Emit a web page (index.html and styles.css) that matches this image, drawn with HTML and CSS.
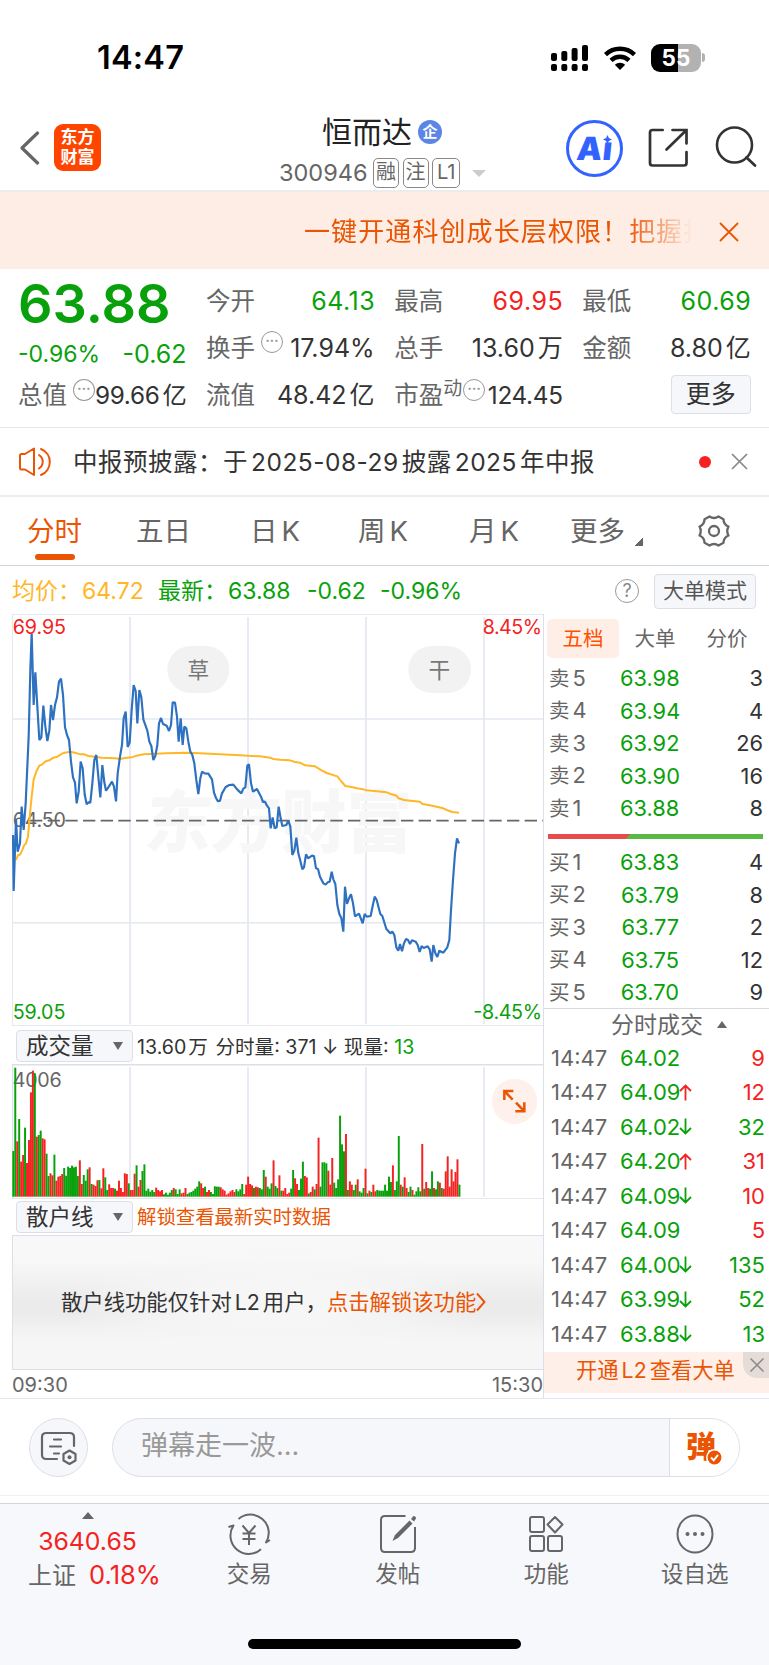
FILE: index.html
```html
<!DOCTYPE html>
<html lang="zh-CN">
<head>
<meta charset="utf-8">
<title>恒而达 300946</title>
<link rel="stylesheet" href="styles.css">
</head>
<body>
<div class="status">
  <span class="clock">14:47</span>
  <svg class="signal" width="40" height="28" viewBox="0 0 40 28">
    <rect x="1" y="9" width="6" height="8" rx="2"/><rect x="11.3" y="7" width="6" height="10" rx="2"/><rect x="21.6" y="4" width="6" height="13" rx="2"/><rect x="32" y="1" width="6" height="16" rx="2"/>
    <rect x="1" y="20" width="6" height="7" rx="2"/><rect x="11.3" y="20" width="6" height="7" rx="2"/><rect x="21.6" y="20" width="6" height="7" rx="2"/><rect x="32" y="20" width="6" height="7" rx="2"/>
  </svg>
  <svg class="wifi" width="34" height="26" viewBox="0 0 34 26">
    <path d="M2.5 9.6a21 21 0 0 1 29 0M8 15.4a13 13 0 0 1 18 0" fill="none" stroke="#000" stroke-width="4.4"/>
    <path d="M17 25l-5.2-5.2a7.5 7.5 0 0 1 10.4 0z"/>
  </svg>
  <span class="battery">55</span><i class="battery-cap"></i>
</div>

<header class="head">
  <svg class="back" width="21" height="34" viewBox="0 0 21 34"><path d="M18.5 2L3 17l15.500 15" fill="none" stroke="#666" stroke-width="3.2" stroke-linecap="round" stroke-linejoin="round"/></svg>
  <div class="logo"><span>东方</span><span>财富</span></div>
  <div class="title">
    <div class="name">恒而达<span class="badge">企</span></div>
    <div class="code"><span class="num">300946</span><i>融</i><i>注</i><i class="l1">L1</i><b class="drop"></b></div>
  </div>
  <div class="ai"><span>A</span><span class="ai-i">ı</span><svg class="spark" width="9" height="9" viewBox="0 0 9 9"><path d="M4.500 0L5.900 3.100 9 4.500 5.900 5.900 4.500 9 3.100 5.900 0 4.500 3.100 3.100z" fill="#3363ff"/></svg></div>
  <svg class="share" width="42" height="42" viewBox="0 0 42 42"><path d="M14.700 3H4.500Q2 3 2 5.500V36Q2 38.500 4.500 38.500H36Q38.500 38.500 38.500 36V25M24.500 3H38.500V16.500M38 3.500L18.500 22.500" fill="none" stroke="#333" stroke-width="2.700" stroke-linecap="round"/></svg>
  <svg class="search" width="42" height="42" viewBox="0 0 42 42"><circle cx="19.500" cy="19" r="17.500" fill="none" stroke="#333" stroke-width="2.600"/><path d="M31.500 31.500L40 39.500" stroke="#333" stroke-width="2.800" stroke-linecap="round"/></svg>
</header>

<div class="promo"><div class="promo-text">一键开通科创成长层权限！把握投</div>
  <svg width="20" height="20" viewBox="0 0 20 20"><path d="M1 1L19 19M19 1L1 19" stroke="#ea5504" stroke-width="1.800"/></svg>
</div>

<section class="quote">
  <div class="last"><div class="price">63.88</div><div class="chg"><span class="pct">-0.96%</span><span class="diff">-0.62</span></div></div>
  <div class="cell"><label>今开</label><span class="g wide">64.13</span></div>
  <div class="cell"><label>最高</label><span class="r wide">69.95</span></div>
  <div class="cell"><label>最低</label><span class="g wide">60.69</span></div>
  <div class="cell"><label>换手</label><em class="dots">•••</em><span>17.94%</span></div>
  <div class="cell"><label>总手</label><span>13.60<u>万</u></span></div>
  <div class="cell"><label>金额</label><span>8.80<u>亿</u></span></div>
  <div class="cell"><label>总值</label><em class="dots">•••</em><span class="tight">99.66<u>亿</u></span></div>
  <div class="cell"><label>流值</label><span>48.42<u>亿</u></span></div>
  <div class="cell"><label>市盈<sup>动</sup></label><em class="dots dots-near">•••</em><span class="tight">124.45</span></div>
  <div class="cell more"><button>更多</button></div>
</section>

<div class="notice">
  <svg width="36" height="30" viewBox="0 0 36 30"><path d="M2 8.500Q2 7 3.500 7H7L16 1.500V28L7 22.500H3.500Q2 22.500 2 21zM21 8a8 8 0 0 1 0 13.500M23 2a14 14 0 0 1 0 26" fill="none" stroke="#ea5504" stroke-width="2" stroke-linecap="round" stroke-linejoin="round"/></svg>
  <p>中报预披露：于<span class="sp">2025-08-29</span>披露<span class="sp">2025</span>年中报</p>
  <i class="red-dot"></i>
  <svg class="close" width="17" height="17" viewBox="0 0 17 17"><path d="M1 1L16 16M16 1L1 16" stroke="#888" stroke-width="1.700"/></svg>
</div>

<nav class="tabs">
  <span class="tab on">分时</span><span class="tab">五日</span><span class="tab">日<s>K</s></span><span class="tab">周<s>K</s></span><span class="tab">月<s>K</s></span><span class="tab">更多</span><i class="corner"></i>
  <svg class="gear" width="34" height="34" viewBox="0 0 34 34"><path d="M12.500 2.500Q17 5.500 21.500 2.500L26.500 5.200Q26.500 10.500 31.500 12.500Q29 17 31.500 21.500Q26.500 23.500 26.500 28.800L21.500 31.500Q17 28.500 12.500 31.500L7.500 28.800Q7.500 23.500 2.500 21.500Q5 17 2.500 12.500Q7.500 10.500 7.500 5.200Z" fill="none" stroke="#666" stroke-width="2.300" stroke-linejoin="round"/><circle cx="17" cy="17" r="5" fill="none" stroke="#666" stroke-width="2.300"/></svg>
</nav>

<div class="avg">
  <span class="y">均价：</span><span class="y v1">64.72</span><span class="n">最新：</span><span class="v2">63.88</span><span class="v3">-0.62</span><span class="v4">-0.96%</span>
  <em class="help">?</em><button>大单模式</button>
</div>

<main class="board">
  <div class="left">
    <svg class="chart" width="532" height="412" viewBox="36 12 1596 1236">
      <g stroke="#e4e8ef" fill="none">
        <path d="M36 13.500H1632M37.500 13V1248M36 1246.500H1632" stroke-width="3"/>
        <path d="M390 21V1243M744 21V1243M1098 21V1243M1452 21V1243" stroke-width="5"/>
        <path d="M37 327H1632M37 938H1632" stroke-width="4.500"/>
      </g>
      <g class="mark"><text transform="translate(430 710) skewX(-6)" textLength="400" lengthAdjust="spacingAndGlyphs">东方</text><text transform="translate(844 710)" textLength="392" lengthAdjust="spacingAndGlyphs">财富</text></g>
      <path d="M90 632H1632" stroke="#666" stroke-width="5" stroke-dasharray="37 16"/>
      <text class="axis mid" x="38" y="650" textLength="160">64.50</text>
      <path d="M48 750 54 735 60 734 66 722 72 707 78 700 84 680 90 610 95 560 101 508 110 482 118 467 127 463 137 454 148 451 160 443 172 440 190 429 210 425 225 428 240 433 253 433 265 438 285 440 305 443 345 445 360 447 375 444 395 442 410 437 430 433 450 432 500 430 560 428 600 430 660 433 720 436 780 439 810 443 820 447 840 449 870 451 885 456 900 458 915 466 945 469 965 481 980 489 1012 499 1023 513 1036 528 1055 531 1070 535 1090 538 1100 541 1160 547 1175 553 1190 557 1195 565 1212 570 1260 575 1267 582 1290 586 1330 595 1340 600 1357 606 1377 608" fill="none" stroke="#ffb727" stroke-width="6" stroke-linejoin="round"/>
      <path d="M39 675 41 843 48 628 53 725 60 700 65 590 71 660 77 580 86 380 91 180 95 70 101 285 106 187 112 290 118 390 124 382 130 287 136 350 142 393 148 362 153 285 159 330 165 285 171 262 177 215 183 206 189 255 195 352 201 375 207 390 213 455 219 502 225 518 230 580 236 545 242 455 248 475 254 553 260 583 266 577 271 578 277 520 283 450 289 435 295 500 301 562 307 465 313 517 318 542 325 532 336 515 342 530 348 574 353 490 360 440 366 405 371 325 377 305 383 411 389 398 395 300 401 225 407 243 412 340 418 240 424 262 430 328 442 362 448 395 454 408 460 450 466 438 472 405 477 340 483 324 489 342 500 347 507 363 513 345 518 277 525 278 531 320 536 395 542 325 548 405 553 350 559 355 565 395 571 425 577 435 583 460 589 510 595 552 601 505 606 485 614 490 625 491 636 508 642 548 648 564 654 574 660 572 666 550 677 531 688 525 700 524 712 539 724 550 730 536 736 532 742 467 747 463 753 520 759 545 771 537 783 560 789 576 795 575 801 587 807 595 812 655 818 622 824 655 830 652 836 590 842 625 847 648 859 645 865 632 871 650 877 735 883 722 889 683 895 730 901 752 907 778 912 772 918 733 924 745 936 737 942 738 948 775 954 777 960 800 970 820 977 824 983 817 989 815 995 785 1000 808 1006 822 1012 885 1018 912 1024 924 1030 965 1035 830 1041 882 1047 865 1053 853 1059 880 1065 919 1077 911 1088 940 1094 912 1100 920 1112 918 1118 888 1124 860 1130 870 1141 912 1147 918 1159 957 1171 970 1177 965 1183 975 1189 1012 1195 1022 1200 1002 1206 1024 1212 1000 1218 987 1224 990 1230 1002 1236 991 1247 995 1253 1005 1259 1026 1265 1008 1271 1014 1283 1009 1289 1018 1295 1055 1300 1005 1306 1030 1312 1041 1318 1022 1330 1028 1342 1012 1348 990 1353 900 1359 810 1365 730 1371 685 1377 700" fill="none" stroke="#2d71c0" stroke-width="6.500" stroke-linejoin="bevel"/>
      <rect x="502" y="108" width="186" height="141" rx="70" fill="#f2f2f2"/><rect x="1225" y="108" width="188" height="141" rx="70" fill="#f2f2f2"/>
      <text class="pill" x="595" y="203">草</text><text class="pill" x="1318" y="203">干</text>
      <text class="axis up" x="38" y="72" textLength="160">69.95</text><text class="axis up" x="1448" y="72" textLength="178">8.45%</text>
      <text class="axis dn" x="38" y="1228" textLength="158">59.05</text><text class="axis dn" x="1420" y="1228" textLength="206">-8.45%</text>
    </svg>
    <div class="ind ind1"><button>成交量<b></b></button><span>13.60<u>万</u> 分时量: 371 ↓ 现量: <span class="g">13</span></span></div>
    <div class="vol">
      <svg id="volume" width="532" height="134" viewBox="36 132 1596 402">
        <path d="M36 134.500H1632M37.500 134V534" stroke="#dcdfe8" stroke-width="4.500"/>
        <path d="M390 141V530M744 141V530M1098 141V530M1452 141V530" stroke="#e4e8ef" stroke-width="5"/>
        <text class="axis mid" x="38" y="200" textLength="147">4006</text>
        <g id="bars"></g>
        <circle cx="1544" cy="244" r="68" fill="#fef0ea"/>
        <path d="M1513 240V213H1540M1515 215L1538 239M1573 247V274H1546M1571 272L1548 248" fill="none" stroke="#ea5504" stroke-width="7.500"/>
      </svg>
    </div>
    <div class="ind ind2"><button>散户线<b></b></button><span class="o">解锁查看最新实时数据</span></div>
    <div class="locked"><p>散户线功能仅针对<span class="sp">L2</span>用户，<span class="o">点击解锁该功能</span></p><svg width="10" height="20" viewBox="0 0 10 20"><path d="M1 1.500L8.500 10 1 18.500" fill="none" stroke="#ea5504" stroke-width="1.900"/></svg></div>
    <div class="times"><span>09:30</span><span>15:30</span></div>
  </div>
  <aside class="right">
    <div class="rtabs"><span class="on">五档</span><span>大单</span><span>分价</span></div>
    <div class="book"><span>卖<s>5</s></span><b>63.98</b><i>3</i></div>
    <div class="book"><span>卖<s>4</s></span><b>63.94</b><i>4</i></div>
    <div class="book"><span>卖<s>3</s></span><b>63.92</b><i>26</i></div>
    <div class="book"><span>卖<s>2</s></span><b>63.90</b><i>16</i></div>
    <div class="book"><span>卖<s>1</s></span><b>63.88</b><i>8</i></div>
    <div class="ratio"></div>
    <div class="book"><span>买<s>1</s></span><b>63.83</b><i>4</i></div>
    <div class="book"><span>买<s>2</s></span><b>63.79</b><i>8</i></div>
    <div class="book"><span>买<s>3</s></span><b>63.77</b><i>2</i></div>
    <div class="book"><span>买<s>4</s></span><b>63.75</b><i>12</i></div>
    <div class="book"><span>买<s>5</s></span><b>63.70</b><i>9</i></div>
    <div class="deals">分时成交<b></b></div>
    <div class="deal"><span>14:47</span><b>64.02</b><i class="r">9</i></div>
    <div class="deal"><span>14:47</span><b>64.09</b><svg class="arr r" viewBox="0 0 13 17"><path d="M6.500 16.500V1.500M1 7L6.500 1.500 12 7"/></svg><i class="r">12</i></div>
    <div class="deal"><span>14:47</span><b>64.02</b><svg class="arr g" viewBox="0 0 13 17"><path d="M6.500 .5V15.500M1 10L6.500 15.500 12 10"/></svg><i class="g">32</i></div>
    <div class="deal"><span>14:47</span><b>64.20</b><svg class="arr r" viewBox="0 0 13 17"><path d="M6.500 16.500V1.500M1 7L6.500 1.500 12 7"/></svg><i class="r">31</i></div>
    <div class="deal"><span>14:47</span><b>64.09</b><svg class="arr g" viewBox="0 0 13 17"><path d="M6.500 .5V15.500M1 10L6.500 15.500 12 10"/></svg><i class="r">10</i></div>
    <div class="deal"><span>14:47</span><b>64.09</b><i class="r">5</i></div>
    <div class="deal"><span>14:47</span><b>64.00</b><svg class="arr g" viewBox="0 0 13 17"><path d="M6.500 .5V15.500M1 10L6.500 15.500 12 10"/></svg><i class="g">135</i></div>
    <div class="deal"><span>14:47</span><b>63.99</b><svg class="arr g" viewBox="0 0 13 17"><path d="M6.500 .5V15.500M1 10L6.500 15.500 12 10"/></svg><i class="g">52</i></div>
    <div class="deal"><span>14:47</span><b>63.88</b><svg class="arr g" viewBox="0 0 13 17"><path d="M6.500 .5V15.500M1 10L6.500 15.500 12 10"/></svg><i class="g">13</i></div>
    <div class="l2">开通<span class="sp">L2</span>查看大单<div class="l2-close"><svg width="14" height="14" viewBox="0 0 14 14"><path d="M.5 .5L13.500 13.500M13.500 .5L.5 13.500" stroke="#888" stroke-width="1.500"/></svg></div></div>
  </aside>
</main>

<div class="barrage">
  <div class="round"><svg width="37" height="34" viewBox="0 0 37 34"><path d="M17 28H6.500Q2 28 2 24V6Q2 2 6.500 2H29.500Q34 2 34 6V15M14 8.500H21M10 15.500H21M14 22.500H19" fill="none" stroke="#666" stroke-width="2.200" stroke-linecap="round"/><path d="M29.500 19.500L35.500 23V29.500L29.500 33 23.500 29.500V23Z" fill="none" stroke="#666" stroke-width="2.200" stroke-linejoin="round"/><circle cx="29.500" cy="26.200" r="2" fill="#666"/></svg></div>
  <div class="field"><span>弹幕走一波...</span><div class="send">弹<svg width="17" height="17" viewBox="0 0 17 17"><circle cx="8.500" cy="8.500" r="7.700" fill="#ea5504" stroke="#fff" stroke-width="1.500"/><path d="M5 8.500L7.700 11.300 12 5.800" fill="none" stroke="#fff" stroke-width="1.900"/></svg></div></div>
</div>

<footer class="foot">
  <div class="index"><i></i><div class="r">3640.65</div><div>上证<span class="r">0.18%</span></div></div>
  <div class="item"><svg width="44" height="42" viewBox="0 0 44 42"><g fill="none" stroke="#666" stroke-width="2"><path d="M11.500 6A18.300 18.300 0 0 1 39 29.500L43 27M34 36.200A18.300 18.300 0 0 1 6.500 12.500L1.500 14" stroke-linejoin="round"/><path d="M15.500 12.500L22 20 28.500 12.500M22 20V32M15.500 20.500H28.500M15.500 26H28.500"/></g></svg><span>交易</span></div>
  <div class="item"><svg width="40" height="42" viewBox="0 0 40 42"><path d="M27.500 3H7Q3 3 3 7V35Q3 39 7 39H33Q37 39 37 35V14" fill="none" stroke="#666" stroke-width="2"/><path d="M31.500 7.500L34.500 10.500 20 25 14.500 28 17 22ZM33 6L35.500 3Q38 3 38 5.500L36 8.500Z" fill="#666"/></svg><span>发帖</span></div>
  <div class="item"><svg width="38" height="42" viewBox="0 0 38 42"><g fill="none" stroke="#666" stroke-width="2"><rect x="3" y="4" width="14" height="15" rx="2"/><rect x="3" y="23" width="14" height="15" rx="2"/><rect x="21" y="23" width="14" height="15" rx="2"/><path d="M28 4L35.500 11.500 28 19.500 20.500 11.500Z" stroke-linejoin="round"/></g></svg><span>功能</span></div>
  <div class="item"><svg width="42" height="42" viewBox="0 0 42 42"><ellipse cx="21" cy="21" rx="17.500" ry="18.500" fill="none" stroke="#666" stroke-width="2"/><circle cx="13.500" cy="21" r="2" fill="#666"/><circle cx="21" cy="21" r="2" fill="#666"/><circle cx="28.500" cy="21" r="2" fill="#666"/></svg><span>设自选</span></div>
</footer>
<div class="home"></div>
<script src="volume.js"></script>
</body>
</html>
```

FILE: styles.css
```css
* { box-sizing: border-box; }
body { margin: 0; width: 769px; height: 1665px; overflow: hidden; background: #fff; color: #333; font-family: Inter, "Noto Sans CJK SC", sans-serif; font-size: 24px; line-height: 30px; }
i, em { font-style: normal; }
u, s { text-decoration: none; }
p { margin: 0; }
span, p, label { white-space: nowrap; }
svg { display: block; flex: none; }
button { font-family: inherit; color: #333; background: #f6f7fa; border: 1.5px solid #dcdfe6; border-radius: 4px; padding: 0; }
.g { color: #09a10b; }
.r { color: #f52222; }
.o { color: #ea5504; }
.sp { margin: 0 3px; }

.status { height: 100px; display: flex; align-items: center; padding: 15px 0 0 97px; }
.clock { width: 453px; font-size: 32.500px; font-weight: 600; color: #000; letter-spacing: .2px; }
.signal { margin-right: 13px; }
.wifi { margin-right: 14px; }
.battery { width: 50px; height: 28px; border-radius: 9px; background: linear-gradient(90deg, #000 55%, #b2b2b2 55%); color: #fff; font-size: 22.5px; font-weight: 700; line-height: 28px; text-align: center; }
.battery-cap { width: 3px; height: 9px; margin-left: 1px; border-radius: 0 4px 4px 0; background: #b2b2b2; }

.head { height: 92px; display: flex; align-items: flex-start; border-bottom: 2px solid #ececee; padding-left: 19px; }
.back { margin: 31px 14px 0 0; }
.logo { width: 47px; height: 47px; margin-top: 24px; border-radius: 9px; background: #ff4400; color: #fff; display: flex; flex-direction: column; align-items: center; padding-top: 4px; font-size: 17px; font-weight: 700; line-height: 19.5px; }
.title { width: 226px; margin: 14px 0 0 178px; }
.name { height: 36px; display: flex; align-items: center; padding-left: 43px; font-size: 30px; color: #222; }
.badge { width: 24px; height: 24px; border-radius: 50%; background: #5b86e5; color: #fff; font-size: 15px; font-weight: 700; line-height: 24px; text-align: center; margin-left: 6px; }
.code { display: flex; align-items: center; height: 32px; margin-top: 7px; color: #666; }
.num { width: 94px; font-size: 23.5px; }
.code i { width: 26px; height: 30px; margin-right: 3.500px; border: 1.500px solid #888; border-radius: 5px; font-size: 20px; line-height: 27px; text-align: center; }
.code .l1 { width: 28px; letter-spacing: -.3px; }
.drop { margin-left: 8px; border: 7px solid transparent; border-top: 7px solid #ccc; border-bottom: 0; }
.ai { position: relative; width: 57px; height: 57px; margin: 20px 25px 0 61px; border: 3px solid #3363ff; border-radius: 50%; color: #3363ff; display: flex; justify-content: center; align-items: center; font-size: 32px; font-weight: 900; }
.ai span { transform: skewX(-6deg); }
.ai-i { margin-left: 1px; }
.spark { position: absolute; left: 34px; top: 12px; }
.share { margin: 27px 25px 0 0; }
.search { margin-top: 26px; }

.promo { height: 77px; background: #feede4; display: flex; align-items: center; padding: 2px 0 0 304px; color: #ea5504; font-size: 26px; }
.promo-text { width: 388px; margin-right: 27px; letter-spacing: 1.100px; overflow: hidden; white-space: nowrap; -webkit-mask-image: linear-gradient(90deg, #000 83%, transparent); mask-image: linear-gradient(90deg, #000 83%, transparent); }

.quote { height: 159px; padding: 8px 18px 0 18px; border-bottom: 1.500px solid #e4e6ea; display: grid; grid-template-columns: repeat(4, 168.500px); grid-template-rows: repeat(3, 47.300px); column-gap: 19.600px; }
.last { grid-row: span 2; color: #09a10b; }
.price { font-size: 54px; font-weight: 600; line-height: 54px; }
.chg { display: flex; justify-content: space-between; line-height: 46px; }
.pct { font-size: 23px; }
.diff { font-size: 25px; }
.cell { display: flex; align-items: center; }
.cell label { color: #666; font-size: 24.500px; }
.cell > span { margin-left: auto; font-size: 25px; }
.cell > .wide { letter-spacing: .5px; margin-right: -.5px; }
.cell > .tight { font-size: 24.300px; letter-spacing: -.3px; }
.cell u { margin-left: 3px; }
.dots { width: 22px; height: 22px; border: 1.800px solid #999; border-radius: 50%; color: #999; font-size: 7.500px; line-height: 18px; text-align: center; margin: -11px 0 0 6px; letter-spacing: .2px; }
.dots-near { margin-left: 1px; }
sup { font-size: 19px; line-height: 0; vertical-align: 9px; }
.more { justify-content: flex-end; }
.more button { width: 80px; height: 39px; margin-top: -2px; font-size: 25px; line-height: 34px; }

.notice { height: 69px; display: flex; align-items: center; padding: 0 0 0 18px; border-bottom: 2px solid #ececee; font-size: 24.500px; }
.notice p { width: 626px; margin-left: 19px; letter-spacing: .5px; }
.red-dot { width: 12px; height: 12px; border-radius: 50%; background: #f52222; margin: 0 20px 0 0; }

.tabs { height: 69px; border-bottom: 1.500px solid #d0d6de; display: flex; padding-left: 27px; font-size: 27.500px; line-height: 69px; color: #666; }
.tab { width: 109px; }
.tab s { margin-left: 4px; }
.tab:nth-child(2) { width: 114px; }
.tab:nth-child(3) { width: 108px; }
.tab:nth-child(4) { width: 111px; }
.tab:nth-child(5) { width: 101px; }
.tab:nth-child(6) { width: 64px; }
.tab.on { position: relative; color: #ea5504; }
.tab.on::after { content: ""; position: absolute; left: 8px; top: 57px; width: 40px; height: 6px; border-radius: 3px; background: #ea5504; }
.corner { width: 9px; height: 9px; margin: 40px 54px 0 0; background: linear-gradient(135deg, transparent 50%, #666 50%); }
.gear { margin-top: 17px; }

.avg { height: 48px; display: flex; align-items: center; padding: 2px 0 0 12px; color: #09a10b; font-size: 23px; }
.y { color: #ffb727; }
.v1 { width: 76px; } .n { width: 70px; } .y:first-child { width: 70px; }
.v2 { width: 79px; } .v3 { width: 73px; } .v4 { width: 235px; }
.help { width: 24px; height: 24px; border: 1.800px solid #999; border-radius: 50%; color: #888; font-size: 18px; line-height: 21px; text-align: center; margin-right: 15px; }
.avg button { width: 102px; height: 35px; color: #555; font-size: 21px; line-height: 30px; }

.board { height: 785px; display: flex; border-bottom: 1.500px solid #e4e6ea; }
.left { width: 531px; margin-left: 12px; flex: none; overflow: hidden; }
.mark text { font-size: 204px; font-weight: 900; fill: #f7f7f7; }
.axis { font-size: 59px; }
.mid { fill: #666; } .up { fill: #f52222; } .dn { fill: #09a10b; }
.pill { font-size: 65px; fill: #777; text-anchor: middle; }
.ind { height: 38px; display: flex; align-items: center; padding-left: 4px; font-size: 19.600px; color: #333; }
.ind1 { padding-top: 1px; }
.ind1 > span { padding-top: 2px; }
.ind button { width: 117px; height: 32px; margin-right: 4px; display: flex; align-items: center; justify-content: space-between; padding: 0 9px; font-size: 22.500px; line-height: 28px; }
.ind b { border: 5px solid transparent; border-top: 8px solid #666; border-bottom: 0; }
.ind u { margin: 0 2px; }
.ind2 { height: 38px; border-top: 1.500px solid #e4e8ef; border-bottom: 1.500px solid #dcdfe8; }
.ind2 .o { font-size: 19.400px; }
.locked { height: 134px; display: flex; align-items: center; padding: 0 0 2px 48px; border: solid #dcdfe8; border-width: 0 0 1.500px 1px; background: radial-gradient(ellipse 40% 45% at 50% 50%, #f6f6f6ff 40%, #f6f6f600), linear-gradient(#f8f8f8 18%, #ebebeb 48%, #ebebeb 58%, #f6f6f6 78%); font-size: 21.350px; }
.times { display: flex; justify-content: space-between; font-size: 20px; color: #666; line-height: 31px; }
.right { width: 226px; border-left: 1.500px solid #dcdfe8; background: #fff; }
.rtabs { display: flex; height: 48px; padding: 5px 0 0 3px; }
.rtabs span { width: 72px; height: 39px; font-size: 20.500px; line-height: 39px; color: #666; text-align: center; }
.rtabs .on { background: #ffeee6; color: #ff5000; border-radius: 5px; }
.book { height: 32.500px; display: flex; align-items: center; padding: 0 6px 0 5px; font-size: 21.800px; line-height: 32px; }
.book span { width: 71px; color: #666; font-size: 20.500px; }
.book s { margin-left: 3px; font-size: 21.800px; }
.book b, .deal b { font-weight: 400; color: #09a10b; }
.book b { width: 59px; white-space: nowrap; text-align: right; }
.book i, .deal i { margin-left: auto; }
.ratio { height: 5px; margin: 9px 6px 7.500px 4px; background: linear-gradient(135deg, #e84b4b 58px, #58b944 58px); }
.deals { height: 33px; margin-top: -1px; border-top: 1.500px solid #d6d9e0; display: flex; align-items: center; padding-left: 67px; font-size: 23px; color: #666; }
.deals b { margin-left: 14px; border: 5px solid transparent; border-bottom: 7px solid #666; border-top: 0; }
.deal { height: 34.500px; display: flex; align-items: center; padding: 0 4px 0 7px; font-size: 22px; line-height: 34px; color: #666; }
.deal span { width: 69px; }
.deal b { width: 58px; white-space: nowrap; text-align: right; }
.arr { width: 13px; height: 17px; margin-left: 1px; fill: none; stroke: currentColor; stroke-width: 1.800; }
.l2 { position: relative; height: 41px; margin-top: 1px; background: #feefe9; color: #ea5504; font-size: 21.300px; line-height: 37px; padding-left: 32px; }
.l2-close { position: absolute; right: 0; top: 0; width: 26px; height: 26px; border-radius: 0 0 0 14px; background: #e5dcd8; display: flex; align-items: center; padding-left: 7px; }

.barrage { height: 97px; border-bottom: 1.500px solid #f0f1f3; display: flex; padding: 19px 0 0 29px; }
.round { width: 59px; height: 59px; border: 1.500px solid #dcdfe6; border-radius: 50%; background: #f6f7fa; display: flex; align-items: center; justify-content: center; }
.field { width: 628px; height: 59px; margin-left: 24px; border: 1.500px solid #dcdfe6; border-radius: 30px; background: #f6f7fa; overflow: hidden; display: flex; justify-content: space-between; padding-left: 28px; font-size: 27px; line-height: 53px; color: #999; }
.send { position: relative; width: 70px; background: #fff; border-left: 1.500px solid #dcdfe6; color: #ea5504; font-size: 30px; font-weight: 900; line-height: 55px; padding-left: 16px; }
.send svg { position: absolute; left: 36px; top: 30px; }

.foot { height: 136px; margin-top: 7px; border-top: 1.500px solid #d2d5da; background: #f7f8fb; display: flex; padding-top: 8px; color: #666; }
.index { width: 175px; display: flex; flex-direction: column; align-items: center; padding-left: 14px; line-height: 34px; }
.index i { border: 6.500px solid transparent; border-bottom: 7px solid #666; border-top: 0; margin: 0 14px 5px 0; }
.index > .r { font-size: 24.800px; margin-right: 14px; }
.index div span { margin-left: 13px; font-size: 25.500px; }
.item { width: 148.500px; display: flex; flex-direction: column; align-items: center; font-size: 22.500px; }
.item svg { margin: 1px 0 4px; }
.home { height: 26px; background: #f7f8fb; }
.home::before { content: ""; display: block; width: 273px; height: 10px; margin-left: 248px; border-radius: 5px; background: #000; }
```

FILE: volume.js
```js
// One entry per trading minute: direction (g = down, r = up) and bar height.
const data = "g137 g387 r166 g233 r105 r125 g207 r101 r170 r313 r378 g370 r180 g185 g198 r175 r172 g129 g62 r70 r64 g126 r48 r60 r62 r68 g86 g63 g90 g86 g93 g88 g90 g62 r109 r38 g65 g48 g82 r88 g38 r36 r32 r49 g50 r25 r85 g58 g20 r37 r26 r26 g24 r18 r48 r26 r14 r70 r68 g40 r20 r20 r69 g94 r30 r50 g77 g97 g18 g24 g15 g20 g14 r27 r20 r16 r20 g7 g12 g6 g12 g20 r26 g22 g8 g22 r10 r12 r26 g8 g12 g14 g18 g24 g30 g46 r40 r26 g30 r14 r20 g14 g8 g31 g30 g30 r28 r22 r18 r6 r10 r16 r20 r14 g22 g16 g22 g38 r8 r36 r60 r38 r34 g26 r30 r28 g26 g22 g80 r60 g30 g24 g40 r109 g32 g26 r64 g18 r18 r26 r8 r12 g24 g80 r55 r38 g20 g54 g105 r62 r58 g10 r14 r30 g22 r38 r177 g30 g103 g103 g100 r78 r36 r116 g42 g26 g52 g243 g157 g136 r188 g20 r46 r36 g20 g36 r52 g16 g12 g26 r84 g10 r18 g14 r36 r16 g20 g18 g18 g18 g36 g18 g60 g44 r94 g20 g46 g182 r36 g30 r58 r26 g14 g30 r20 g6 g16 g28 g16 r158 g24 r44 r26 g24 g76 r26 g22 g46 r42 g26 r24 r76 r121 r30 r82 r46 r74 r112 g36".split(" ");
const bars = document.getElementById("bars");
data.forEach((d, i) => {
  const h = Number(d.slice(1));
  const bar = document.createElementNS("http://www.w3.org/2000/svg", "rect");
  bar.setAttribute("x", 37 + i * 5.87);
  bar.setAttribute("y", 530 - h);
  bar.setAttribute("width", 5.9);
  bar.setAttribute("height", h);
  bar.setAttribute("fill", d[0] === "g" ? "#09a10b" : "#f52222");
  bars.appendChild(bar);
});
```
